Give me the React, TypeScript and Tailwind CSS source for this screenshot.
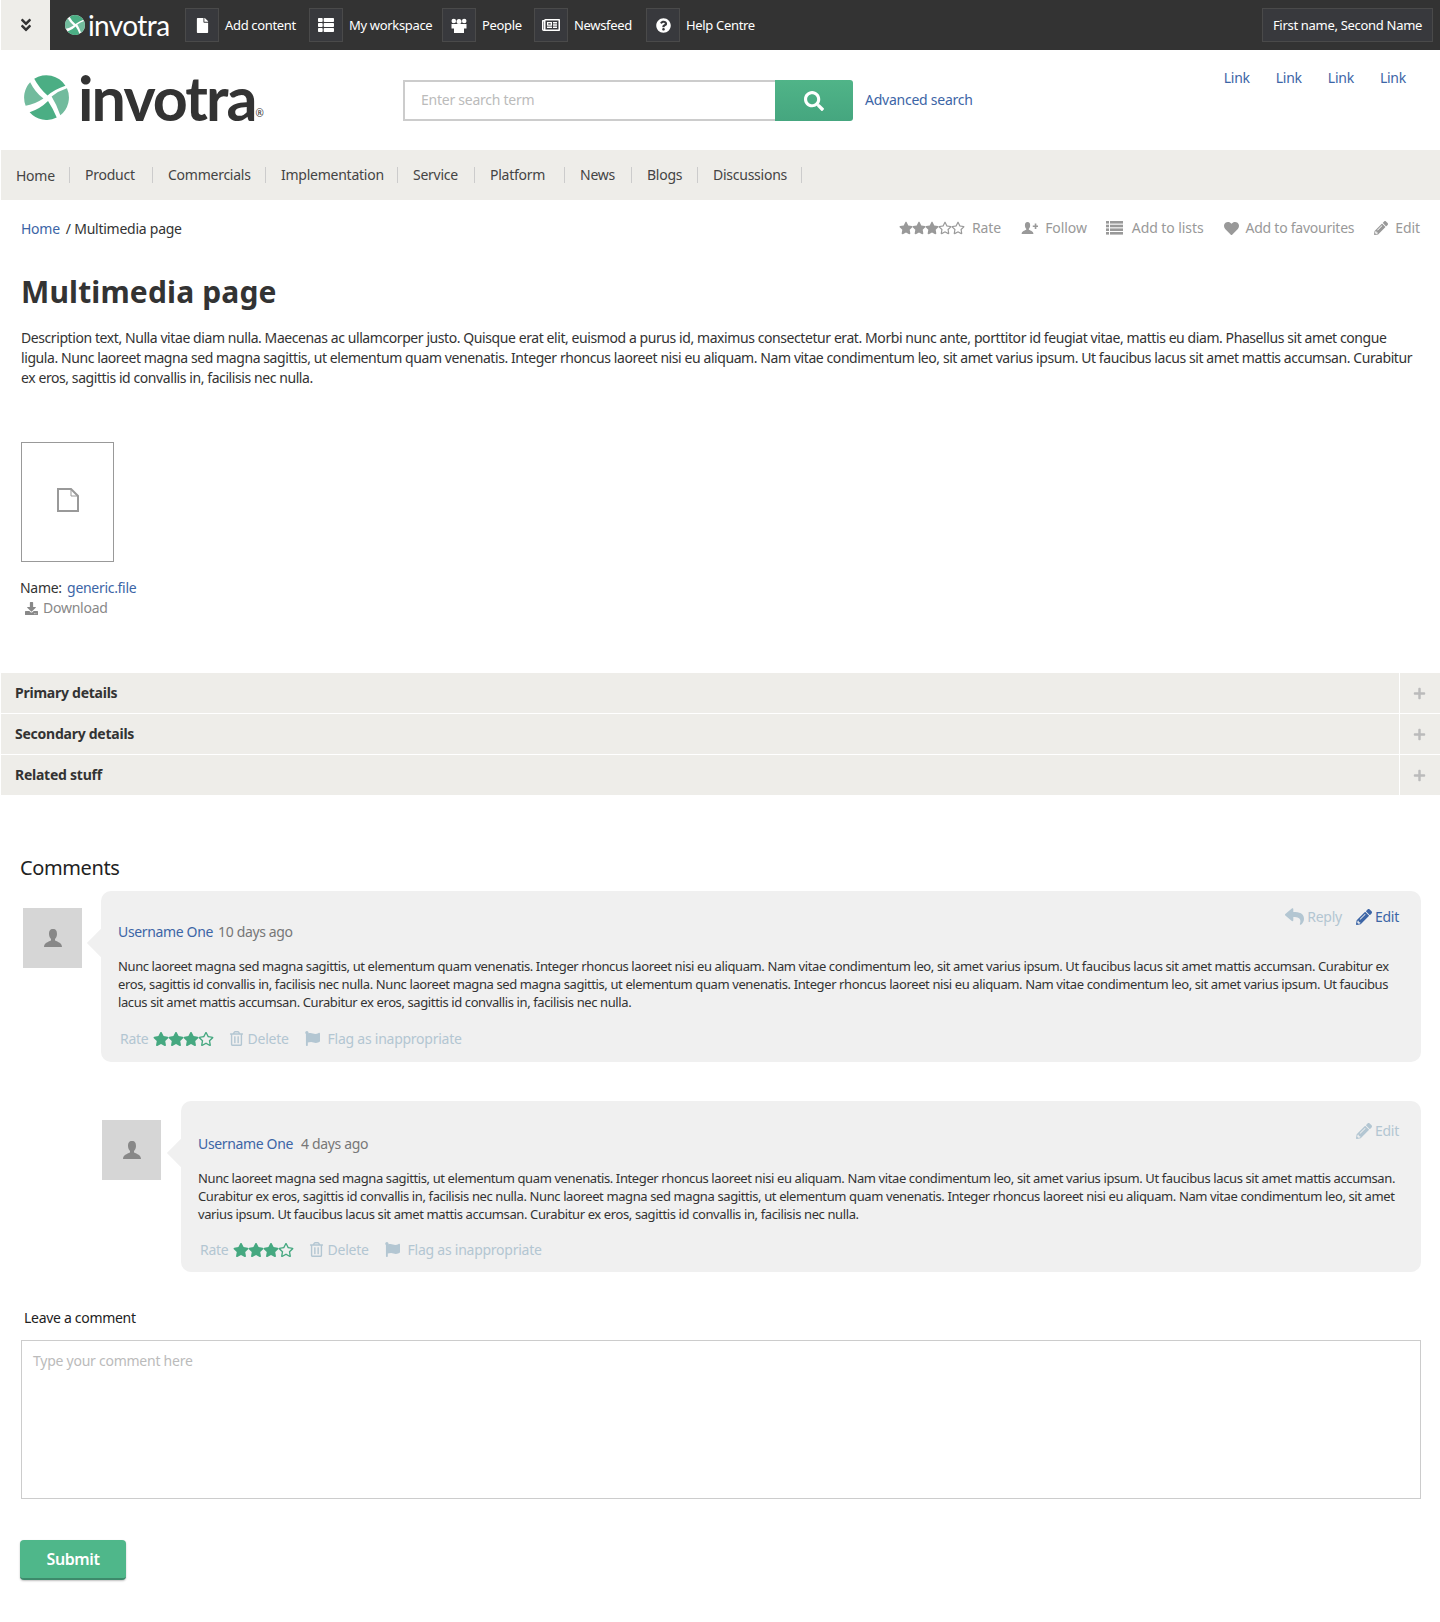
import type { ReactNode } from "react";
import {
  FaAngleDoubleDown, FaDownload, FaFile, FaFlag, FaHeart, FaPencilAlt, FaPlus, FaQuestionCircle,
  FaRegNewspaper, FaRegStar, FaRegTrashAlt, FaReply, FaSearch, FaStar, FaThList,
} from "react-icons/fa";

const Logo = ({ size, small }: { size: number; small?: boolean }) => (
  <svg width={size} height={size} viewBox="0 0 44 44">
    {small && <circle cx="22" cy="22" r="22" fill="#fff" />}
    <path d="M10 3.6 A22 22 0 0 1 40.5 10.5 Q30 14 23 20 Q15 13 10 3.6Z" fill="#4bae84" />
    <path d="M6 7 Q11 17 19 23 Q10 29 1.6 30 A22 22 0 0 1 6 7Z" fill="#72bb9d" />
    <path d="M5.5 36.5 Q16 33 23.5 25.5 Q29 34 32 41.6 A22 22 0 0 1 5.5 36.5Z" fill="#4bae84" />
    <path d="M42 13 Q34 15.5 27 21 Q32 29 35.5 39.3 A22 22 0 0 0 42 13Z" fill="#72bb9d" />
  </svg>
);

const bustPath = "M10 1 C7 1 6 3 6 6 C6 8 7 10 8 11 V12.5 C5 14 1 15 1 19 H19 C19 15 15 14 12 12.5 V11 C13 10 14 8 14 6 C14 3 13 1 10 1Z";

const Bust = ({ size }: { size: number }) => (
  <svg width={size} height={size} viewBox="0 0 20 20" fill="currentColor">
    <path d={bustPath} />
  </svg>
);

const FollowIcon = () => (
  <svg width="17" height="16" viewBox="0 0 26 20" fill="currentColor">
    <path d={bustPath} />
    <path d="M18 6 H21 V3 H23.5 V6 H26 V8.5 H23.5 V11.5 H21 V8.5 H18Z" />
  </svg>
);

const PeopleIcon = () => (
  <svg width="16" height="15" viewBox="0 0 16 15" fill="currentColor">
    <circle cx="2.8" cy="3" r="2.3" />
    <circle cx="8" cy="3.5" r="2.5" />
    <circle cx="13.2" cy="3" r="2.3" />
    <path d="M0.5 6 H15.5 V10.5 H13 V15 H3 V10.5 H0.5Z" />
  </svg>
);

const RowsIcon = () => (
  <svg width="17" height="14" viewBox="0 0 17 14" fill="currentColor">
    {[0, 3.7, 7.4, 11].map((y) => (
      <g key={y}>
        <rect x="0" y={y} width="3" height="2.6" />
        <rect x="4" y={y} width="13" height="2.6" />
      </g>
    ))}
  </svg>
);

const topItems = [
  { label: "Add content", width: 124, icon: <FaFile size={15} /> },
  { label: "My workspace", width: 133, icon: <FaThList size={16} /> },
  { label: "People", width: 92, icon: <PeopleIcon /> },
  { label: "Newsfeed", width: 112, icon: <FaRegNewspaper size={18} /> },
  { label: "Help Centre", width: 110, icon: <FaQuestionCircle size={15} /> },
];

const navItems = [
  { label: "Home", width: 54 },
  { label: "Product", width: 68 },
  { label: "Commercials", width: 98 },
  { label: "Implementation", width: 117 },
  { label: "Service", width: 62 },
  { label: "Platform", width: 75 },
  { label: "News", width: 52 },
  { label: "Blogs", width: 51 },
  { label: "Discussions", width: 89 },
];

const lorem =
  "Nunc laoreet magna sed magna sagittis, ut elementum quam venenatis. Integer rhoncus laoreet nisi eu aliquam. Nam vitae condimentum leo, sit amet varius ipsum. Ut faucibus lacus sit amet mattis accumsan. Curabitur ex eros, sagittis id convallis in, facilisis nec nulla. Nunc laoreet magna sed magna sagittis, ut elementum quam venenatis. Integer rhoncus laoreet nisi eu aliquam. Nam vitae condimentum leo, sit amet varius ipsum. Ut faucibus lacus sit amet mattis accumsan. Curabitur ex eros, sagittis id convallis in, facilisis nec nulla.";

const Stars = ({ green }: { green?: boolean }) => (
  <span className={`inline-flex ${green ? "text-[#45a880]" : "text-[#999]"}`}>
    {[0, 1, 2].map((i) => (
      <FaStar key={i} size={green ? 16 : 14} className="-mr-[1px]" />
    ))}
    {!green && <FaRegStar size={14} className="-mr-[1px]" />}
    <FaRegStar size={green ? 16 : 14} />
  </span>
);

const PageAction = ({ icon, label, wide, tight }: { icon: ReactNode; label: string; wide?: boolean; tight?: boolean }) => (
  <span className={`flex items-center ${wide ? "-ml-[1px] gap-[9px]" : "gap-[7px]"} text-[#999] ${tight ? "tracking-[-0.25px]" : "tracking-[-0.08px]"}`}>
    {icon}
    <span>{label}</span>
  </span>
);

const Comment = ({ when, second, className }: { when: string; second?: boolean; className: string }) => (
  <div className={`flex ${className}`}>
    <div className={`${second ? "mt-[19px]" : "mt-[17px]"} flex h-[60px] w-[59px] shrink-0 items-center justify-center bg-[#d6d6d6] text-[#888]`}>
      <Bust size={20} />
    </div>
    <div className={`relative ${second ? "ml-[20px]" : "ml-[19px]"} flex-1 rounded-[10px] bg-[#f0f0f0] pl-[17px] pr-[21px]`}>
      <div className="absolute left-[-10px] top-[42px] size-[20px] rotate-45 bg-[#f0f0f0]" />
      <div className={`absolute right-[22px] ${second ? "top-[19px]" : "top-[15px]"} flex items-center gap-[14px]`}>
        {!second && (
          <span className="flex items-center gap-[3px] text-[#b3c6d2]">
            <FaReply size={19} />
            Reply
          </span>
        )}
        <span className={`flex items-center gap-[3px] ${second ? "text-[#b3c6d2]" : "text-[#3c65a6]"}`}>
          <FaPencilAlt size={16} />
          Edit
        </span>
      </div>
      <p className={`relative ${second ? "mt-[33px]" : "mt-[31px]"} text-[14px] leading-[20px] tracking-[-0.35px]`}>
        <span className="text-[#3c65a6]">Username One</span>
        <span className={`${second ? "ml-[8px]" : "ml-[5px]"} text-[#777]`}>{when}</span>
      </p>
      <p className="relative mt-[15px] text-[13px] leading-[18px] tracking-[-0.39px] text-[#333]">{lorem}</p>
      <div className={`${second ? "mt-[16px] pb-[12px]" : "mt-[17px] pb-[13px]"} flex items-center text-[14px] text-[#b3c6d2]`}>
        <span className="ml-[2px] mr-[4px]">Rate</span>
        <Stars green />
        <FaRegTrashAlt size={15} className="ml-[15px] mr-[4px]" />
        Delete
        <FaFlag size={15} className="ml-[16px] mr-[8px]" />
        Flag as inappropriate
      </div>
    </div>
  </div>
);

export default function App() {
  return (
    <div className="min-h-[1622px] bg-white pl-px font-['Noto_Sans',sans-serif] text-[14px] text-[#333] tracking-[-0.25px]">
      <div className="flex h-[50px] items-center bg-[#333] text-[13px] text-white tracking-[-0.33px]">
        <div className="flex h-full w-[49px] items-center justify-center bg-[#eeede9] text-[#333]">
          <FaAngleDoubleDown size={16} />
        </div>
        <div className="ml-[15px] flex w-[120px] items-center gap-[3px]">
          <Logo size={20} small />
          <span className="font-['Lato',sans-serif] text-[28px] leading-none tracking-[-0.6px]">invotra</span>
        </div>
        {topItems.map((item) => (
          <div key={item.label} className="flex items-center gap-[6px]" style={{ width: item.width }}>
            <span className="flex size-[34px] items-center justify-center border border-[#4a4a4a] bg-[#38393d]">{item.icon}</span>
            <span className="pt-px">{item.label}</span>
          </div>
        ))}
        <div className="ml-auto mr-[7px] flex h-[34px] w-[171px] items-center justify-center border border-[#4a4a4a] bg-[#38393d] pt-px tracking-[-0.3px]">
          First name, Second Name
        </div>
      </div>

      <div className="flex h-[100px] items-start">
        <div className="ml-[23px] mt-[25px] flex w-[379px] items-center gap-[9px]">
          <Logo size={45} />
          <span className="font-['Lato',sans-serif] text-[61px] font-bold leading-[45px] tracking-[-1.9px]">invotra</span>
          <span className="-ml-[9px] mt-[30px] text-[10px] leading-none">®</span>
        </div>
        <div className="mt-[30px] flex h-[41px] w-[450px]">
          <div className="flex flex-1 items-center border-2 border-r-0 border-[#ccc] pb-[2px] pl-[16px] text-[#bbb]">Enter search term</div>
          <div className="flex w-[78px] items-center justify-center rounded-r-[3px] bg-linear-to-b from-[#50b488] to-[#45a67f] text-white">
            <FaSearch size={20} />
          </div>
        </div>
        <span className="ml-[12px] mt-[39px] text-[#3c65a6]">Advanced search</span>
        <div className="ml-auto mr-[34px] mt-[17px] flex gap-[26px] text-[#3c65a6]">
          <span>Link</span>
          <span>Link</span>
          <span>Link</span>
          <span>Link</span>
        </div>
      </div>

      <div className="flex h-[50px] items-center bg-[#eeede9] pl-[15px] text-[#444]">
        {navItems.map((item, i) => (
          <span key={item.label} className="mr-[15px] flex h-[16px] items-center border-r border-[#ccc]" style={{ width: item.width }}>
            <span className={i === 0 ? "" : "mb-[2px]"}>{item.label}</span>
          </span>
        ))}
      </div>

      <div className="flex h-[39px] items-center justify-between px-[20px] pt-[19px] leading-[20px]">
        <div>
          <span className="text-[#3c65a6]">Home</span>
          <span className="ml-[6px]">/ Multimedia page</span>
        </div>
        <div className="mb-[2px] flex gap-[20px]">
          <PageAction icon={<Stars />} label="Rate" />
          <PageAction icon={<FollowIcon />} label="Follow" />
          <PageAction icon={<RowsIcon />} label="Add to lists" wide />
          <PageAction icon={<FaHeart size={15} />} label="Add to favourites" tight />
          <PageAction icon={<FaPencilAlt size={14} />} label="Edit" />
        </div>
      </div>

      <h1 className="ml-[20px] mt-[31px] text-[30px] font-bold leading-[44px] tracking-[0.15px]">Multimedia page</h1>
      <p className="mx-[20px] mt-[14px] leading-[20px] tracking-[-0.42px] text-[#333]">
        Description text, Nulla vitae diam nulla. Maecenas ac ullamcorper justo. Quisque erat elit, euismod a purus id, maximus consectetur erat. Morbi nunc ante, porttitor id feugiat vitae, mattis eu diam. Phasellus sit amet congue ligula. Nunc laoreet magna sed magna sagittis, ut elementum quam venenatis. Integer rhoncus laoreet nisi eu aliquam. Nam vitae condimentum leo, sit amet varius ipsum. Ut faucibus lacus sit amet mattis accumsan. Curabitur ex eros, sagittis id convallis in, facilisis nec nulla.
      </p>

      <div className="ml-[20px] mt-[54px] flex h-[120px] w-[93px] items-center justify-center border border-[#999] pb-[4px]">
        <svg width="22" height="24" viewBox="0 0 22 24" fill="none" stroke="#999" strokeWidth="2">
          <path d="M1 1 H14 L21 8 V23 H1Z" />
          <path d="M14 1 V8 H21" strokeWidth="1" />
        </svg>
      </div>
      <div className="ml-[19px] mt-[16px] leading-[20px] tracking-[-0.3px]">
        Name: <span className="ml-[2px] text-[#3c65a6]">generic.file</span>
      </div>
      <div className="ml-[24px] flex items-center gap-[5px] leading-[20px] text-[#888]">
        <FaDownload size={13} />
        Download
      </div>

      <div className="mt-[55px] flex flex-col gap-px">
        {["Primary details", "Secondary details", "Related stuff"].map((title) => (
          <div key={title} className="flex h-[40px] items-center bg-[#eeede9]">
            <span className="mb-[2px] flex-1 pl-[14px] font-bold">{title}</span>
            <span className="flex h-full w-[41px] items-center justify-center border-l border-white pr-px text-[#bbb]">
              <FaPlus size={13} />
            </span>
          </div>
        ))}
      </div>

      <h2 className="ml-[19px] mt-[59px] text-[20px] leading-[28px] tracking-[-0.4px] text-[#222]">Comments</h2>
      <Comment className="ml-[22px] mr-[19px] mt-[9px]" when="10 days ago" />
      <Comment className="ml-[101px] mr-[19px] mt-[39px]" when="4 days ago" second />

      <div className="ml-[23px] mt-[36px] leading-[20px] text-[#222] tracking-[-0.3px]">Leave a comment</div>
      <div className="ml-[20px] mr-[19px] mt-[12px] h-[159px] border border-[#ccc] pl-[11px] pt-[9px] text-[#bbb]">Type your comment here</div>
      <div className="ml-[19px] mt-[41px] flex h-[40px] w-[106px] items-center justify-center rounded-[4px] border-b-2 border-[#3d8a6b] bg-[#4fb78a] text-[16px] font-semibold tracking-[-0.4px] text-white shadow-[0_1px_2px_rgba(0,0,0,0.25)]">
        Submit
      </div>
    </div>
  );
}
